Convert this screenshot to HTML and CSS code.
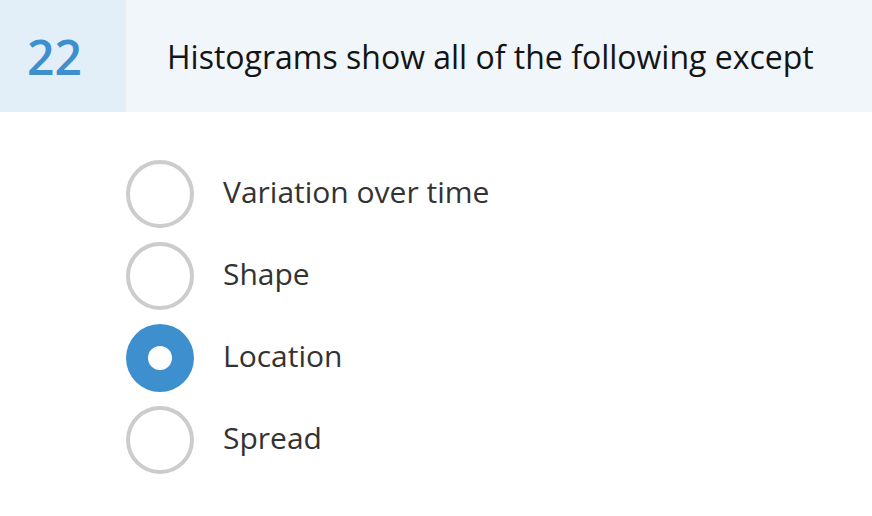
FILE: index.html
```html
<!DOCTYPE html>
<html>
<head>
<meta charset="utf-8">
<link rel="stylesheet" href="styles.css">
</head>
<body>
<div class="header">
  <div class="num">22</div>
  <div class="title">Histograms show all of the following except</div>
</div>
<div class="options">
  <div class="opt"><span class="radio"></span><span class="label">Variation over time</span></div>
  <div class="opt"><span class="radio"></span><span class="label">Shape</span></div>
  <div class="opt"><span class="radio checked"></span><span class="label">Location</span></div>
  <div class="opt"><span class="radio"></span><span class="label">Spread</span></div>
</div>
</body>
</html>
```
FILE: styles.css
```css
html, body { margin: 0; padding: 0; background: #fff; }
body { font-family: "Open Sans", "Liberation Sans", sans-serif; width: 872px; height: 516px; overflow: hidden; }
.header { display: flex; height: 112px; background: #f1f6fb; }
.num { width: 126px; background: #e3eff8; color: #3d8fcd; font-size: 48px; font-weight: 600; display: flex; align-items: center; padding-left: 27px; box-sizing: border-box; }
.title { display: flex; align-items: center; padding-left: 41px; font-size: 32px; color: #141414; }
.options { padding: 48px 0 0 126px; display: flex; flex-direction: column; gap: 14px; }
.opt { display: flex; align-items: center; height: 68px; }
.radio { flex: none; width: 68px; height: 68px; box-sizing: border-box; border: 4px solid #cccccc; border-radius: 50%; background: #fff; display: flex; align-items: center; justify-content: center; }
.radio.checked { border: none; background: #3d8fcd; }
.radio.checked::after { content: ""; width: 24px; height: 24px; border-radius: 50%; background: #fff; }
.label { margin-left: 29px; font-size: 30px; line-height: 1; margin-top: -4px; color: #333; }
```
